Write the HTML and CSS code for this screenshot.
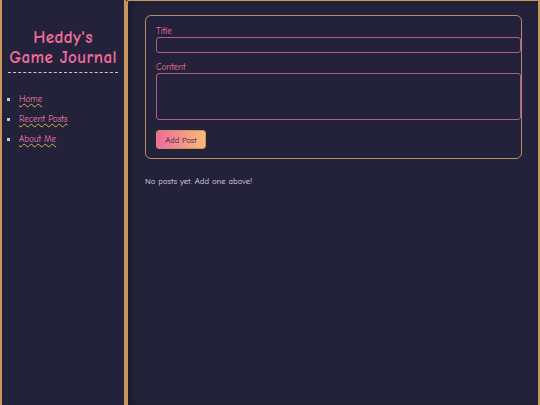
FILE: index.html
```html
<!DOCTYPE html>
<html lang="en">
<head>
<meta charset="utf-8">
<title>Heddy's Game Journal</title>
<link rel="stylesheet" href="styles.css">
</head>
<body>
<div class="layout">
  <aside class="sidebar">
    <h1 class="brand">Heddy's<br>Game Journal</h1>
    <ul class="nav">
      <li><a href="#">Home</a></li>
      <li><a href="#">Recent Posts</a></li>
      <li><a href="#">About Me</a></li>
    </ul>
  </aside>
  <main class="main">
    <form class="card">
      <div class="field">
        <label class="label" for="title">Title</label>
        <input class="input" id="title" type="text">
      </div>
      <div class="field">
        <label class="label" for="content">Content</label>
        <textarea class="input textarea" id="content"></textarea>
      </div>
      <button class="btn" type="button">Add Post</button>
    </form>
    <p class="empty">No posts yet. Add one above!</p>
  </main>
</div>
</body>
</html>
```

FILE: styles.css
```css
* { box-sizing: content-box; }
html, body {
  margin: 0;
  height: 100%;
  background: #24223a;
}
body {
  font-family: "Comic Sans MS", "Comic Neue", cursive;
  color: #d9d5ea;
}
.layout {
  display: flex;
  height: 405px;
  overflow: hidden;
}
.sidebar {
  width: 110px;
  padding: 0 6px;
  border-left: 2px solid #c9965c;
  border-right: 2px solid #c9965c;
  background: #24223a;
  flex-shrink: 0;
}
.brand {
  margin: 28px 0 0;
  padding-bottom: 4px;
  border-bottom: 1px dashed #d8c8b0;
  font-size: 17px;
  line-height: 20px;
  letter-spacing: 0.4px;
  font-weight: bold;
  text-align: center;
  white-space: nowrap;
  color: #f06d9e;
}
.nav {
  margin: 20px 0 0;
  padding: 0 0 0 11px;
  list-style: square;
  color: #c8c2e0;
  font-size: 9px;
}
.nav li {
  line-height: 12px;
  margin-bottom: 8px;
}
.nav a {
  color: #f07aa8;
  text-decoration: underline wavy #d6b04e;
  text-decoration-thickness: 0.5px;
  text-underline-offset: 1px;
}
.main {
  flex: 1;
  border: 2px solid #c9965c;
  border-bottom: none;
  border-top-width: 1px;
  border-top-left-radius: 3px;
  padding: 14px 16px 0 17px;
  box-shadow: inset 4px 0 6px rgba(0, 0, 0, 0.25);
}
.card {
  display: flex;
  flex-direction: column;
  align-items: flex-start;
  border: 1px solid #b58d60;
  border-radius: 6px;
  padding: 10px 10px 9px;
}
.field {
  width: 100%;
  margin-bottom: 9px;
}
.label {
  display: block;
  font-size: 9px;
  line-height: 10px;
  margin-bottom: 1px;
  color: #e8709c;
}
.input {
  display: block;
  width: 100%;
  height: 10px;
  padding: 2px 4px;
  margin: 0;
  border: 1px solid #ad5f88;
  border-radius: 3px;
  background: #24223a;
  color: #d9d5ea;
  font-family: inherit;
  font-size: 8px;
  outline: none;
}
.textarea {
  height: 41px;
  resize: none;
}
.btn {
  margin-top: 1px;
  width: 48px;
  height: 17px;
  padding: 0;
  border: 1px solid #c9965c;
  border-radius: 3px;
  background: linear-gradient(90deg, #f0699f, #f9bb78);
  color: #2a1f35;
  font-family: inherit;
  font-size: 8.5px;
}
.empty {
  margin: 16px 0 0;
  font-size: 8.7px;
  line-height: 12px;
  color: #dcd8ec;
}
```
